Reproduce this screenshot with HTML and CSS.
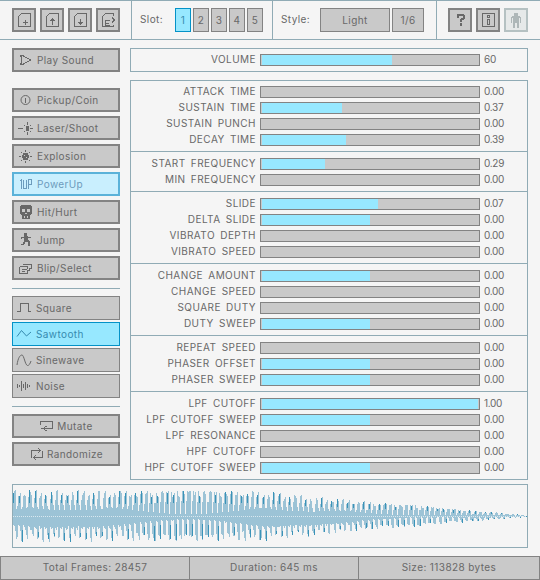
FILE: index.html
```html
<!DOCTYPE html>
<html lang="en">
<head>
    <meta charset="UTF-8">
    <title>rFXGen</title>
    <link rel="stylesheet" href="styles.css">
</head>
<body>
    <header class="toolbar">
        <div class="tool-group files">
            <button class="btn thick square"><svg class="icon" viewBox="0 0 16 16"><path class="line" d="M5.5 1.5H14.5V14.5H2.5V4.5L5.5 1.5M9.5 8V13M7 10.5H12"/></svg></button>
            <button class="btn thick square"><svg class="icon" viewBox="0 0 16 16"><path class="line" d="M5.5 1.5H14.5V14.5H2.5V4.5L5.5 1.5M8.5 13V7M6.5 9L8.5 7L10.5 9"/></svg></button>
            <button class="btn thick square"><svg class="icon" viewBox="0 0 16 16"><path class="line" d="M5.5 1.5H14.5V14.5H2.5V4.5L5.5 1.5M8.5 7V12M6.5 10L8.5 12L10.5 10"/></svg></button>
            <button class="btn thick square"><svg class="icon" viewBox="0 0 16 16"><path class="line" d="M13.5 4V1.5H5.5L2.5 4.5V14.5H13.5V13M10 8.5H5.5V13.5H10M5.5 11H9M12 5.5L14.5 8L12 10.5"/></svg></button>
        </div>
        <div class="tool-group slots">
            <span class="tool-label">Slot:</span>
            <div class="slot-list">
                <button class="btn slot active">1</button>
                <button class="btn slot">2</button>
                <button class="btn slot">3</button>
                <button class="btn slot">4</button>
                <button class="btn slot">5</button>
            </div>
        </div>
        <div class="tool-group styles">
            <span class="tool-label">Style:</span>
            <div class="slot-list">
                <button class="btn style-name">Light</button>
                <button class="btn style-count">1/6</button>
            </div>
        </div>
        <div class="tool-group help">
            <button class="btn thick square"><svg class="icon" viewBox="0 0 16 16"><path class="solid" d="M5 2H12V3H13V7H12V8H10V10H8V7H9V6H11V4H7V6H5V2ZM8 11H10V14H8V11Z"/></svg></button>
            <button class="btn thick square"><svg class="icon" viewBox="0 0 16 16"><path class="line" d="M2.5 1.5H14.5V14.5H2.5ZM7.5 3.5H9.5V5.5H7.5ZM7.5 7.5H9.5V12.5H7.5Z"/></svg></button>
            <button class="btn thick square disabled"><svg class="icon" viewBox="0 0 16 16"><path class="solid" d="M6 1H10V4H12V5H13V11H12V6H11V10H11V16H9V11H7V16H5V10H5V6H4V11H3V5H4V4H6Z"/></svg></button>
        </div>
    </header>

    <main class="content">
        <aside class="side">
            <button class="btn thick wide"><svg class="icon" viewBox="0 0 16 16"><path class="line" d="M2.5 3.5H4.5L12.5 8L4.5 12.5H2.5L3.5 10.5V5.5Z"/></svg>Play Sound</button>

            <div class="side-list sounds">
                <button class="btn thick wide"><svg class="icon" viewBox="0 0 16 16"><circle class="round" cx="7.5" cy="8" r="4.5"/><path class="line" d="M7.5 5.5V10.5"/></svg>Pickup/Coin</button>
                <button class="btn thick wide"><svg class="icon" viewBox="0 0 16 16"><path class="line" d="M0 8.5H5M12 8.5H15M9.5 2V5M9.5 12V15M6 5L7 6M13 5L12 6M6 12L7 11M13 12L12 11"/><path class="solid" d="M8 6H11V11H8Z"/></svg>Laser/Shoot</button>
                <button class="btn thick wide"><svg class="icon" viewBox="0 0 16 16"><path class="line" d="M7.5 2V4M7.5 13V15M1 8.5H3M12 8.5H14M3 4L4 5M12 4L11 5M3 13L4 12M12 13L11 12"/><path class="solid" fill-rule="evenodd" d="M5 5H10V7H11V10H10V12H5V10H4V7H5ZM6 7V8H7V7ZM8 9V10H9V9Z"/></svg>Explosion</button>
                <button class="btn thick wide focus"><svg class="icon" viewBox="0 0 16 16"><path class="line" d="M1.5 5.5L3.5 3.5V12.5M5.5 3.5V12.5H8.5V3.5M10.5 12.5V3.5H13.5V8.5H10.5"/></svg>PowerUp</button>
                <button class="btn thick wide"><svg class="icon" viewBox="0 0 16 16"><path class="solid" fill-rule="evenodd" d="M3 1H13V2H14V10H13V11H12V15H4V11H3V10H2V2H3ZM4 5V8H7V5ZM9 5V8H12V5ZM7 9V10H9V9ZM6 12V14H7V12ZM9 12V14H10V12Z"/></svg>Hit/Hurt</button>
                <button class="btn thick wide"><svg class="icon" viewBox="0 0 16 16"><path class="solid" d="M6 1H9V4H10V5H13V6H10V8H11V9H12V14H10V10H7V12H6V13H3V12H5V10H6V6H4V7H3V5H6Z"/></svg>Jump</button>
                <button class="btn thick wide"><svg class="icon" viewBox="0 0 16 16"><path class="line" d="M1.5 6.5H9.5V8.5M1.5 6.5V13.5H9.5V10.5H11.5V8.5H13.5V4.5H4.5M4 9.5H9M4 11.5H7"/></svg>Blip/Select</button>
            </div>

            <hr class="rule">

            <div class="side-list waves">
                <button class="btn wide"><svg class="icon" viewBox="0 0 16 16"><path class="line" d="M1 11.5H4.5V3.5H12.5V11.5H15"/></svg>Square</button>
                <button class="btn wide active"><svg class="icon" viewBox="0 0 16 16"><path class="smooth" d="M1 10.5L5.5 4.5L10.5 10L15 6"/></svg>Sawtooth</button>
                <button class="btn wide"><svg class="icon" viewBox="0 0 16 16"><path class="smooth" d="M1 13C2 6 4 3 6 3C8 3 9 13 11.5 13.5C13 13.5 14 12 15 9"/></svg>Sinewave</button>
                <button class="btn wide"><svg class="icon" viewBox="0 0 16 16"><path class="line" d="M1.5 6V10M3.5 7V9M5.5 3V13M7.5 6V10M9.5 4V12M11.5 6V10M13.5 7V9"/></svg>Noise</button>
            </div>

            <hr class="rule">

            <div class="side-list">
                <button class="btn thick wide center"><svg class="icon" viewBox="0 0 16 16"><path class="line" d="M1.5 7V3.5H13.5V10.5H5M7.5 8L4.5 10.5L7.5 13M1.5 10.5H4"/></svg>Mutate</button>
                <button class="btn thick wide center"><svg class="icon" viewBox="0 0 16 16"><path class="line" d="M2.5 11.5V4.5H11M9 2L11.5 4.5L9 7M13.5 4.5V11.5H5M7 9L4.5 11.5L7 14"/></svg>Randomize</button>
            </div>
        </aside>

        <section class="params">
            <div class="panel volume">
                <div class="row"><label>VOLUME</label><div class="track"><div class="fill" style="width:60%"></div></div><span class="val">60</span></div>
            </div>

            <div class="panel sliders">
                <div class="group first">
                    <div class="row"><label>ATTACK TIME</label><div class="track"><div class="fill" style="width:0%"></div></div><span class="val">0.00</span></div>
                    <div class="row"><label>SUSTAIN TIME</label><div class="track"><div class="fill" style="width:37%"></div></div><span class="val">0.37</span></div>
                    <div class="row"><label>SUSTAIN PUNCH</label><div class="track"><div class="fill" style="width:0%"></div></div><span class="val">0.00</span></div>
                    <div class="row"><label>DECAY TIME</label><div class="track"><div class="fill" style="width:39%"></div></div><span class="val">0.39</span></div>
                </div>
                <div class="group">
                    <div class="row"><label>START FREQUENCY</label><div class="track"><div class="fill" style="width:29%"></div></div><span class="val">0.29</span></div>
                    <div class="row"><label>MIN FREQUENCY</label><div class="track"><div class="fill" style="width:0%"></div></div><span class="val">0.00</span></div>
                </div>
                <div class="group">
                    <div class="row"><label>SLIDE</label><div class="track"><div class="fill" style="width:53.5%"></div></div><span class="val">0.07</span></div>
                    <div class="row"><label>DELTA SLIDE</label><div class="track"><div class="fill" style="width:50%"></div></div><span class="val">0.00</span></div>
                    <div class="row"><label>VIBRATO DEPTH</label><div class="track"><div class="fill" style="width:0%"></div></div><span class="val">0.00</span></div>
                    <div class="row"><label>VIBRATO SPEED</label><div class="track"><div class="fill" style="width:0%"></div></div><span class="val">0.00</span></div>
                </div>
                <div class="group">
                    <div class="row"><label>CHANGE AMOUNT</label><div class="track"><div class="fill" style="width:50%"></div></div><span class="val">0.00</span></div>
                    <div class="row"><label>CHANGE SPEED</label><div class="track"><div class="fill" style="width:0%"></div></div><span class="val">0.00</span></div>
                    <div class="row"><label>SQUARE DUTY</label><div class="track"><div class="fill" style="width:0%"></div></div><span class="val">0.00</span></div>
                    <div class="row"><label>DUTY SWEEP</label><div class="track"><div class="fill" style="width:50%"></div></div><span class="val">0.00</span></div>
                </div>
                <div class="group">
                    <div class="row"><label>REPEAT SPEED</label><div class="track"><div class="fill" style="width:0%"></div></div><span class="val">0.00</span></div>
                    <div class="row"><label>PHASER OFFSET</label><div class="track"><div class="fill" style="width:50%"></div></div><span class="val">0.00</span></div>
                    <div class="row"><label>PHASER SWEEP</label><div class="track"><div class="fill" style="width:50%"></div></div><span class="val">0.00</span></div>
                </div>
                <div class="group">
                    <div class="row"><label>LPF CUTOFF</label><div class="track"><div class="fill" style="width:100%"></div></div><span class="val">1.00</span></div>
                    <div class="row"><label>LPF CUTOFF SWEEP</label><div class="track"><div class="fill" style="width:50%"></div></div><span class="val">0.00</span></div>
                    <div class="row"><label>LPF RESONANCE</label><div class="track"><div class="fill" style="width:0%"></div></div><span class="val">0.00</span></div>
                    <div class="row"><label>HPF CUTOFF</label><div class="track"><div class="fill" style="width:0%"></div></div><span class="val">0.00</span></div>
                    <div class="row"><label>HPF CUTOFF SWEEP</label><div class="track"><div class="fill" style="width:50%"></div></div><span class="val">0.00</span></div>
                </div>
            </div>
        </section>
    </main>

    <div class="wave-panel"><canvas id="wave" width="514" height="62"></canvas></div>

    <footer class="status">
        <div class="cell frames">Total Frames: 28457</div>
        <div class="cell duration">Duration: 645 ms</div>
        <div class="cell size">Size: 113828 bytes</div>
    </footer>

    <script src="wave.js"></script>
</body>
</html>
```

FILE: styles.css
```css
* {
    box-sizing: border-box;
}
body {
    margin: 0;
    width: 540px;
    height: 580px;
    overflow: hidden;
    background-color: #f5f5f5;
    color: #686868;
    font-family: Inter, sans-serif;
    font-size: 10px;
    letter-spacing: 0.4px;
}
.toolbar {
    display: flex;
    height: 40px;
    border-top: 1px solid #90abb5;
    border-bottom: 1px solid #90abb5;
}
.tool-group {
    display: flex;
    align-items: center;
    border-right: 1px solid #90abb5;
}
.files {
    width: 132px;
    padding-left: 12px;
    gap: 4px;
}
.slots {
    width: 141px;
    padding-left: 8px;
}
.styles {
    width: 164px;
    padding-left: 8px;
}
.help {
    flex: 1;
    padding-left: 11px;
    gap: 4px;
    border-right: none;
}
.tool-label {
    padding-bottom: 2px;
}
.slots .tool-label {
    width: 35px;
}
.styles .tool-label {
    width: 39px;
}
.slot-list {
    display: flex;
    gap: 2px;
}

.btn {
    display: flex;
    align-items: center;
    height: 24px;
    padding: 0 0 1px;
    background-color: #c9c9c9;
    border: 1px solid #838383;
    color: #686868;
    font-family: inherit;
    font-size: inherit;
    letter-spacing: inherit;
}
.thick {
    border-width: 2px;
}
.square {
    width: 24px;
    justify-content: center;
    padding: 0;
}
.slot {
    width: 16px;
    justify-content: center;
}
.style-name {
    width: 70px;
    justify-content: center;
}
.style-count {
    width: 32px;
    justify-content: center;
}
.wide {
    width: 108px;
    padding-left: 3px;
    gap: 4px;
    white-space: nowrap;
}
.thick.wide {
    padding-left: 4px;
    gap: 3px;
}
.thick.center {
    justify-content: center;
    padding-left: 0;
    gap: 2px;
}
.active {
    background-color: #97e8ff;
    border-color: #0492c7;
    color: #368baf;
}
.focus {
    background-color: #c9effe;
    border-color: #5bb2d9;
    color: #6c9bbc;
}
.disabled {
    background-color: #e6e9e9;
    border-color: #b5c1c2;
    color: #aeb7b8;
}

.icon {
    flex: none;
    width: 16px;
    height: 16px;
}
.line,
.smooth,
.round {
    fill: none;
    stroke: currentColor;
    stroke-width: 1;
}
.line {
    shape-rendering: crispEdges;
}
.solid {
    fill: currentColor;
    shape-rendering: crispEdges;
}

.content {
    display: flex;
    gap: 10px;
    padding: 8px 12px 0;
}
.side {
    width: 108px;
}
.side-list {
    display: flex;
    flex-direction: column;
    gap: 4px;
}
.sounds {
    margin-top: 16px;
}
.waves {
    gap: 2px;
}
.rule {
    height: 1px;
    margin: 8px 0 7px;
    border: none;
    background-color: #90abb5;
}

.params {
    width: 398px;
}
.panel {
    border: 1px solid #90abb5;
}
.volume {
    height: 24px;
    margin-bottom: 8px;
    padding-top: 3px;
}
.sliders {
    height: 400px;
}
.group {
    padding: 4px 0 3px;
    border-top: 1px solid #90abb5;
}
.group.first {
    padding-top: 3px;
    border-top: none;
}
.row {
    display: flex;
    align-items: center;
    height: 16px;
}
.row label {
    width: 125px;
    margin-right: 4px;
    padding-bottom: 2px;
    text-align: right;
    white-space: nowrap;
    letter-spacing: 0.45px;
    word-spacing: 2px;
}
.track {
    width: 220px;
    height: 12px;
    padding: 0 1px;
    background-color: #c9c9c9;
    border: 1px solid #838383;
}
.fill {
    height: 100%;
    background-color: #97e8ff;
}
.val {
    margin-left: 4px;
    padding-bottom: 2px;
    letter-spacing: -0.3px;
}

.wave-panel {
    width: 516px;
    height: 64px;
    margin: 4px 12px 0;
    border: 1px solid #90abb5;
}
#wave {
    display: block;
}

.status {
    display: flex;
    height: 24px;
    margin-top: 8px;
    background-color: #c9c9c9;
    border: 1px solid #838383;
}
.cell {
    display: flex;
    align-items: center;
    justify-content: center;
    padding-bottom: 2px;
}
.frames {
    width: 188px;
}
.duration {
    width: 169px;
    border-left: 1px solid #838383;
}
.size {
    flex: 1;
    border-left: 1px solid #838383;
}
```

FILE: wave.js
```js
// sound wave preview: sawtooth teeth over a solid band, fading out after the sustain
const canvas = document.getElementById('wave');
const ctx = canvas.getContext('2d');
const mid = 31;
const LIGHT = '#9cc3d6';
const DARK = '#3a93b8';

function envelope(x) {
    const points = [[0, 26], [250, 25], [275, 22], [340, 16], [365, 13], [400, 11], [440, 7], [490, 3], [514, 0.5]];
    for (let i = 1; i < points.length; i++) {
        if (x <= points[i][0]) {
            const [x0, y0] = points[i - 1];
            const [x1, y1] = points[i];
            return y0 + (y1 - y0) * (x - x0) / (x1 - x0);
        }
    }
    return 0;
}

function column(x, top, bottom, color) {
    ctx.fillStyle = color;
    ctx.fillRect(x, Math.round(mid - top), 1, Math.max(1, Math.round(top + bottom)));
}

for (let x = 0; x < 514; x++) {
    const amp = envelope(x);
    const phase = (x / 5.3) % 1;
    const drift = Math.sin(x / 37) * 0.18;
    const wobble = 0.88 + 0.12 * Math.sin(x * 0.9);

    if (phase < 0.2) {
        column(x, amp * wobble, amp * (0.35 + drift), LIGHT);
        if (x % 2 === 0) {
            column(x, amp * wobble, -amp * 0.5, DARK);
        }
    } else if (phase < 0.4) {
        column(x, amp * wobble, amp * (0.6 - drift), LIGHT);
    } else if (phase < 0.6) {
        column(x, amp * (0.25 + drift), amp * (wobble - 0.05), LIGHT);
    } else if (phase < 0.8) {
        column(x, amp * (0.4 - drift), amp * wobble, LIGHT);
        if (x % 2 === 1) {
            column(x, -amp * (0.5 + drift), amp * wobble, DARK);
        }
    } else {
        column(x, amp * (0.8 - drift), amp * (0.3 + drift), LIGHT);
    }

    // small bright specks along the zero line
    if (x % 2 === 0) {
        ctx.fillStyle = '#d9e8ef';
        ctx.fillRect(x, mid, 1, 1);
    }
}
```
